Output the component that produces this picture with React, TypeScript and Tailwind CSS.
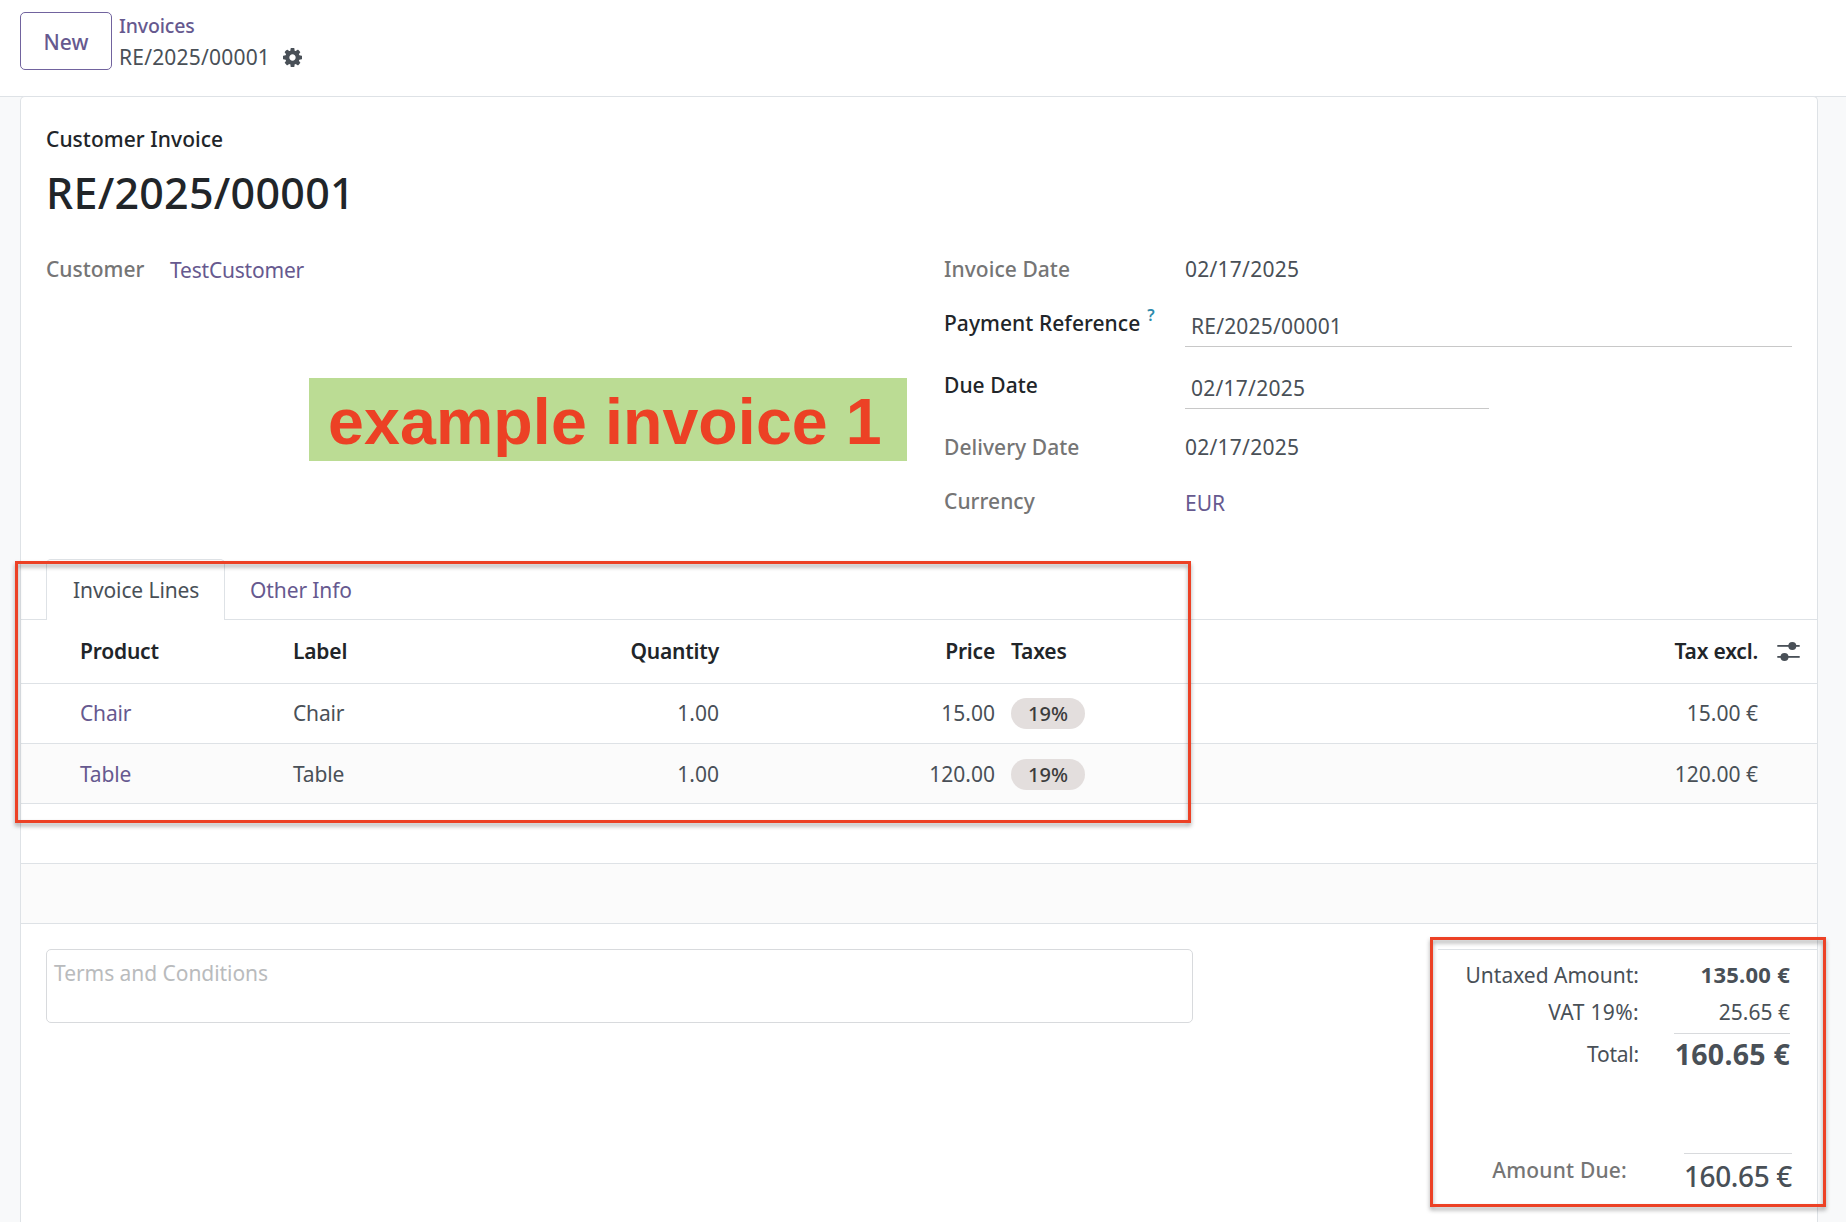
import type { ReactNode } from "react";

const LINES = [
  { product: "Chair", qty: "1.00", price: "15.00", tax: "19%", subtotal: "15.00 €" },
  { product: "Table", qty: "1.00", price: "120.00", tax: "19%", subtotal: "120.00 €" },
];

const COLS = "grid grid-cols-[213px_213px_213px_276px_405px_359px_58px] pl-[59px]";

function GearIcon() {
  return (
    <svg viewBox="0 0 1536 1536" className="size-[19px]" fill="#495057">
      <path d="M1024 768q0-106-75-181t-181-75-181 75-75 181 75 181 181 75 181-75 75-181zm512-109v222q0 12-8 23t-20 13l-185 28q-19 54-39 91 35 50 107 138 10 12 10 25t-9 23q-27 37-99 108t-94 71q-12 0-26-9l-138-108q-44 23-91 38-16 136-29 186-7 28-36 28H657q-14 0-24.500-8.500T621 1506l-28-184q-49-16-90-37l-141 107q-10 9-25 9-14 0-25-11-126-114-165-168-7-10-7-23 0-12 8-23 15-21 51-66.500t54-70.500q-27-50-41-99L29 913q-13-2-21-12.500T0 877V655q0-12 8-23t19-13l186-28q14-46 39-92-40-57-107-138-10-12-10-24 0-10 9-23 26-36 98.500-107.500T337 135q13 0 26 10l138 107q44-23 91-38 16-136 29-186 7-28 36-28h222q14 0 24.500 8.500T915 30l28 184q49 16 90 37l142-107q9-9 24-9 13 0 25 10 129 119 165 170 7 8 7 22 0 12-8 23-15 21-51 66.500t-54 70.500q26 50 41 98l183 28q13 2 21 12.500t8 23.500z" />
    </svg>
  );
}

function SlidersIcon() {
  return (
    <svg viewBox="0 0 23 19" className="h-[19px] w-[23px]" fill="#495057">
      <rect x="0.300" y="3" width="22.400" height="1.800" />
      <rect x="0.300" y="14" width="22.400" height="1.800" />
      <circle cx="15.300" cy="4.100" r="4" />
      <circle cx="7.500" cy="15" r="4" />
    </svg>
  );
}

function Field({ h, label, strong, help, children }: { h: string; label: string; strong?: boolean; help?: boolean; children: ReactNode }) {
  return (
    <div className={`flex ${h}`}>
      <div className={`flex w-[241px] shrink-0 font-medium tracking-[0.050px] ${strong ? "text-[#212529]" : "text-[#757575]"}`}>
        {label}
        {help && <sup className="top-0 ml-[7px] -mt-[3px] text-[16px] leading-[18px] font-semibold text-[#2f8aab]">?</sup>}
      </div>
      {children}
    </div>
  );
}

export default function App() {
  return (
    <div className="relative flex h-[1222px] w-full flex-col overflow-hidden bg-[#f8f9fa] font-['Noto_Sans',sans-serif] text-[21px] leading-7 text-[#495057]">
      <header className="flex h-[97px] shrink-0 items-start border-b border-[#dee2e6] bg-white pl-5">
        <button className="mt-3 h-[58px] w-[92px] rounded-[5px] border border-[#71639e] pt-px font-medium text-[#66598f]">New</button>
        <div className="ml-[7px] pt-3">
          <div className="text-[19.500px] font-medium tracking-[-0.150px] text-[#66598f]">Invoices</div>
          <div className="mt-[3px] flex">
            <span className="tracking-[0.200px]">RE/2025/00001</span>
            <span className="mt-[5px] ml-[13px]"><GearIcon /></span>
          </div>
        </div>
      </header>

      <main className="mr-7 ml-5 -mt-px flex min-h-0 flex-1 flex-col rounded-t-[5px] border border-b-0 border-[#dee2e6] bg-white">
        <div className="px-[25px] pt-7">
          <div className="font-medium tracking-[0.050px] text-[#212529]">Customer Invoice</div>
          <h1 className="mt-3 text-[43px] leading-[56px] font-medium tracking-[0.250px] text-[#212529]">RE/2025/00001</h1>
          <div className="mt-[34px] flex">
            <div className="flex w-[898px]">
              <div className="w-[124px] font-medium text-[#757575]">Customer</div>
              <div className="mt-px tracking-[-0.200px] text-[#66598f]">TestCustomer</div>
            </div>
            <div className="w-[848px]">
              <Field h="h-[50px]" label="Invoice Date"><div className="tracking-[0.250px]">02/17/2025</div></Field>
              <Field h="h-[62px] [&>div:first-child]:pt-1" label="Payment Reference" strong help>
                <div className="h-[42px] w-[607px] border-b border-[#c8c8c8] pt-[7px] pl-[6px] tracking-[0.200px]">RE/2025/00001</div>
              </Field>
              <Field h="h-[62px] [&>div:first-child]:pt-1" label="Due Date" strong>
                <div className="h-[42px] w-[304px] border-b border-[#c8c8c8] pt-[7px] pl-[6px] tracking-[0.250px]">02/17/2025</div>
              </Field>
              <Field h="h-[54px] pt-1" label="Delivery Date"><div className="tracking-[0.250px]">02/17/2025</div></Field>
              <Field h="h-[34px] pt-1" label="Currency"><div className="mt-[2px] text-[#66598f]">EUR</div></Field>
            </div>
          </div>
        </div>

        <nav className="mt-[42px] flex h-[61px] shrink-0">
          <div className="w-[25px] border-b border-[#dee2e6]" />
          <div className="w-[179px] rounded-t-[5px] border border-b-0 border-[#dee2e6] pt-4 pl-[26px] tracking-[-0.100px]">Invoice Lines</div>
          <div className="flex-1 border-b border-[#dee2e6] pt-[17px] pl-[25px] tracking-[-0.100px] text-[#66598f]">Other Info</div>
        </nav>

        <section>
          <div className={`${COLS} h-16 border-b border-[#dee2e6] pt-[17px] font-semibold tracking-[-0.200px] text-[#212529]`}>
            <div>Product</div>
            <div>Label</div>
            <div className="text-right">Quantity</div>
            <div className="text-right">Price</div>
            <div className="pl-4">Taxes</div>
            <div className="-mr-px pr-[2px] text-right">Tax excl.</div>
            <div className="pt-[5px] pl-[18px]"><SlidersIcon /></div>
          </div>
          {LINES.map((l, i) => (
            <div key={l.product} className={`${COLS} h-[60px] border-b border-[#dee2e6] ${i % 2 ? "bg-[#fbfbfb] pt-4" : "pt-[15px]"}`}>
              <div className="tracking-[-0.150px] text-[#66598f]">{l.product}</div>
              <div className="tracking-[-0.150px]">{l.product}</div>
              <div className="text-right">{l.qty}</div>
              <div className="text-right">{l.price}</div>
              <div className="pl-4">
                <span className="-mt-px flex h-[31px] w-[74px] items-center justify-center rounded-full bg-[#e3dedd] pt-px text-[20px] font-medium text-[#3c3c3c]">{l.tax}</span>
              </div>
              <div className="pr-px text-right">{l.subtotal}</div>
            </div>
          ))}
          <div className="h-[60px] border-b border-[#dee2e6]" />
          <div className="h-[60px] border-b border-[#dee2e6] bg-[#fbfbfb]" />
        </section>

        <footer className="mt-[25px] flex pl-[25px]">
          <div className="h-[74px] w-[1147px] rounded-[5px] border border-[#d8dadd] pt-[9px] pl-[7px] tracking-[-0.050px] text-[#b9bbbd]">Terms and Conditions</div>
          <div className="ml-[245px] flex-1 border-t border-[#dee2e6] pt-[11px] pr-[27px]">
            <div className="flex justify-end">
              <span>Untaxed Amount:</span>
              <span className="-mt-px w-[151px] text-right text-[22px] font-bold tracking-[0.250px]">135.00 €</span>
            </div>
            <div className="mt-[9px] flex justify-end">
              <span className="tracking-[0.350px]">VAT 19%:</span>
              <span className="w-[151px] text-right">25.65 €</span>
            </div>
            <div className="mt-[7px] flex justify-end">
              <span className="mt-[7px] tracking-[-0.200px]">Total:</span>
              <span className="ml-[35px] w-[116px] border-t border-[#d8dadd] pt-[2px] text-right text-[28.500px] leading-9 font-bold tracking-[0.250px] whitespace-nowrap">160.65 €</span>
            </div>
            <div className="-mr-[2px] mt-[81px] flex justify-end">
              <span className="mt-[3px] font-medium tracking-[0.200px] text-[#757575]">Amount Due:</span>
              <span className="ml-[57px] w-[108px] border-t border-[#d8dadd] pt-1 pr-px text-right text-[28px] leading-9 font-medium tracking-[-0.400px] whitespace-nowrap">160.65 €</span>
            </div>
          </div>
        </footer>
      </main>

      <div className="absolute top-[378px] left-[309px] h-[83px] w-[598px] bg-[#bbdc94] pt-px pl-[19px] font-['Liberation_Sans',sans-serif] text-[64.500px] leading-[86px] font-bold tracking-[0.100px] whitespace-nowrap text-[#ec4125]">
        example invoice 1
      </div>
      <div className="absolute top-[561px] left-[15px] h-[262px] w-[1176px] border-[3px] border-[#ec4125] drop-shadow-[0_3px_2px_rgba(0,0,0,0.35)]" />
      <div className="absolute top-[937px] left-[1430px] h-[270px] w-[396px] border-[3px] border-[#ec4125] drop-shadow-[0_3px_2px_rgba(0,0,0,0.35)]" />
    </div>
  );
}
